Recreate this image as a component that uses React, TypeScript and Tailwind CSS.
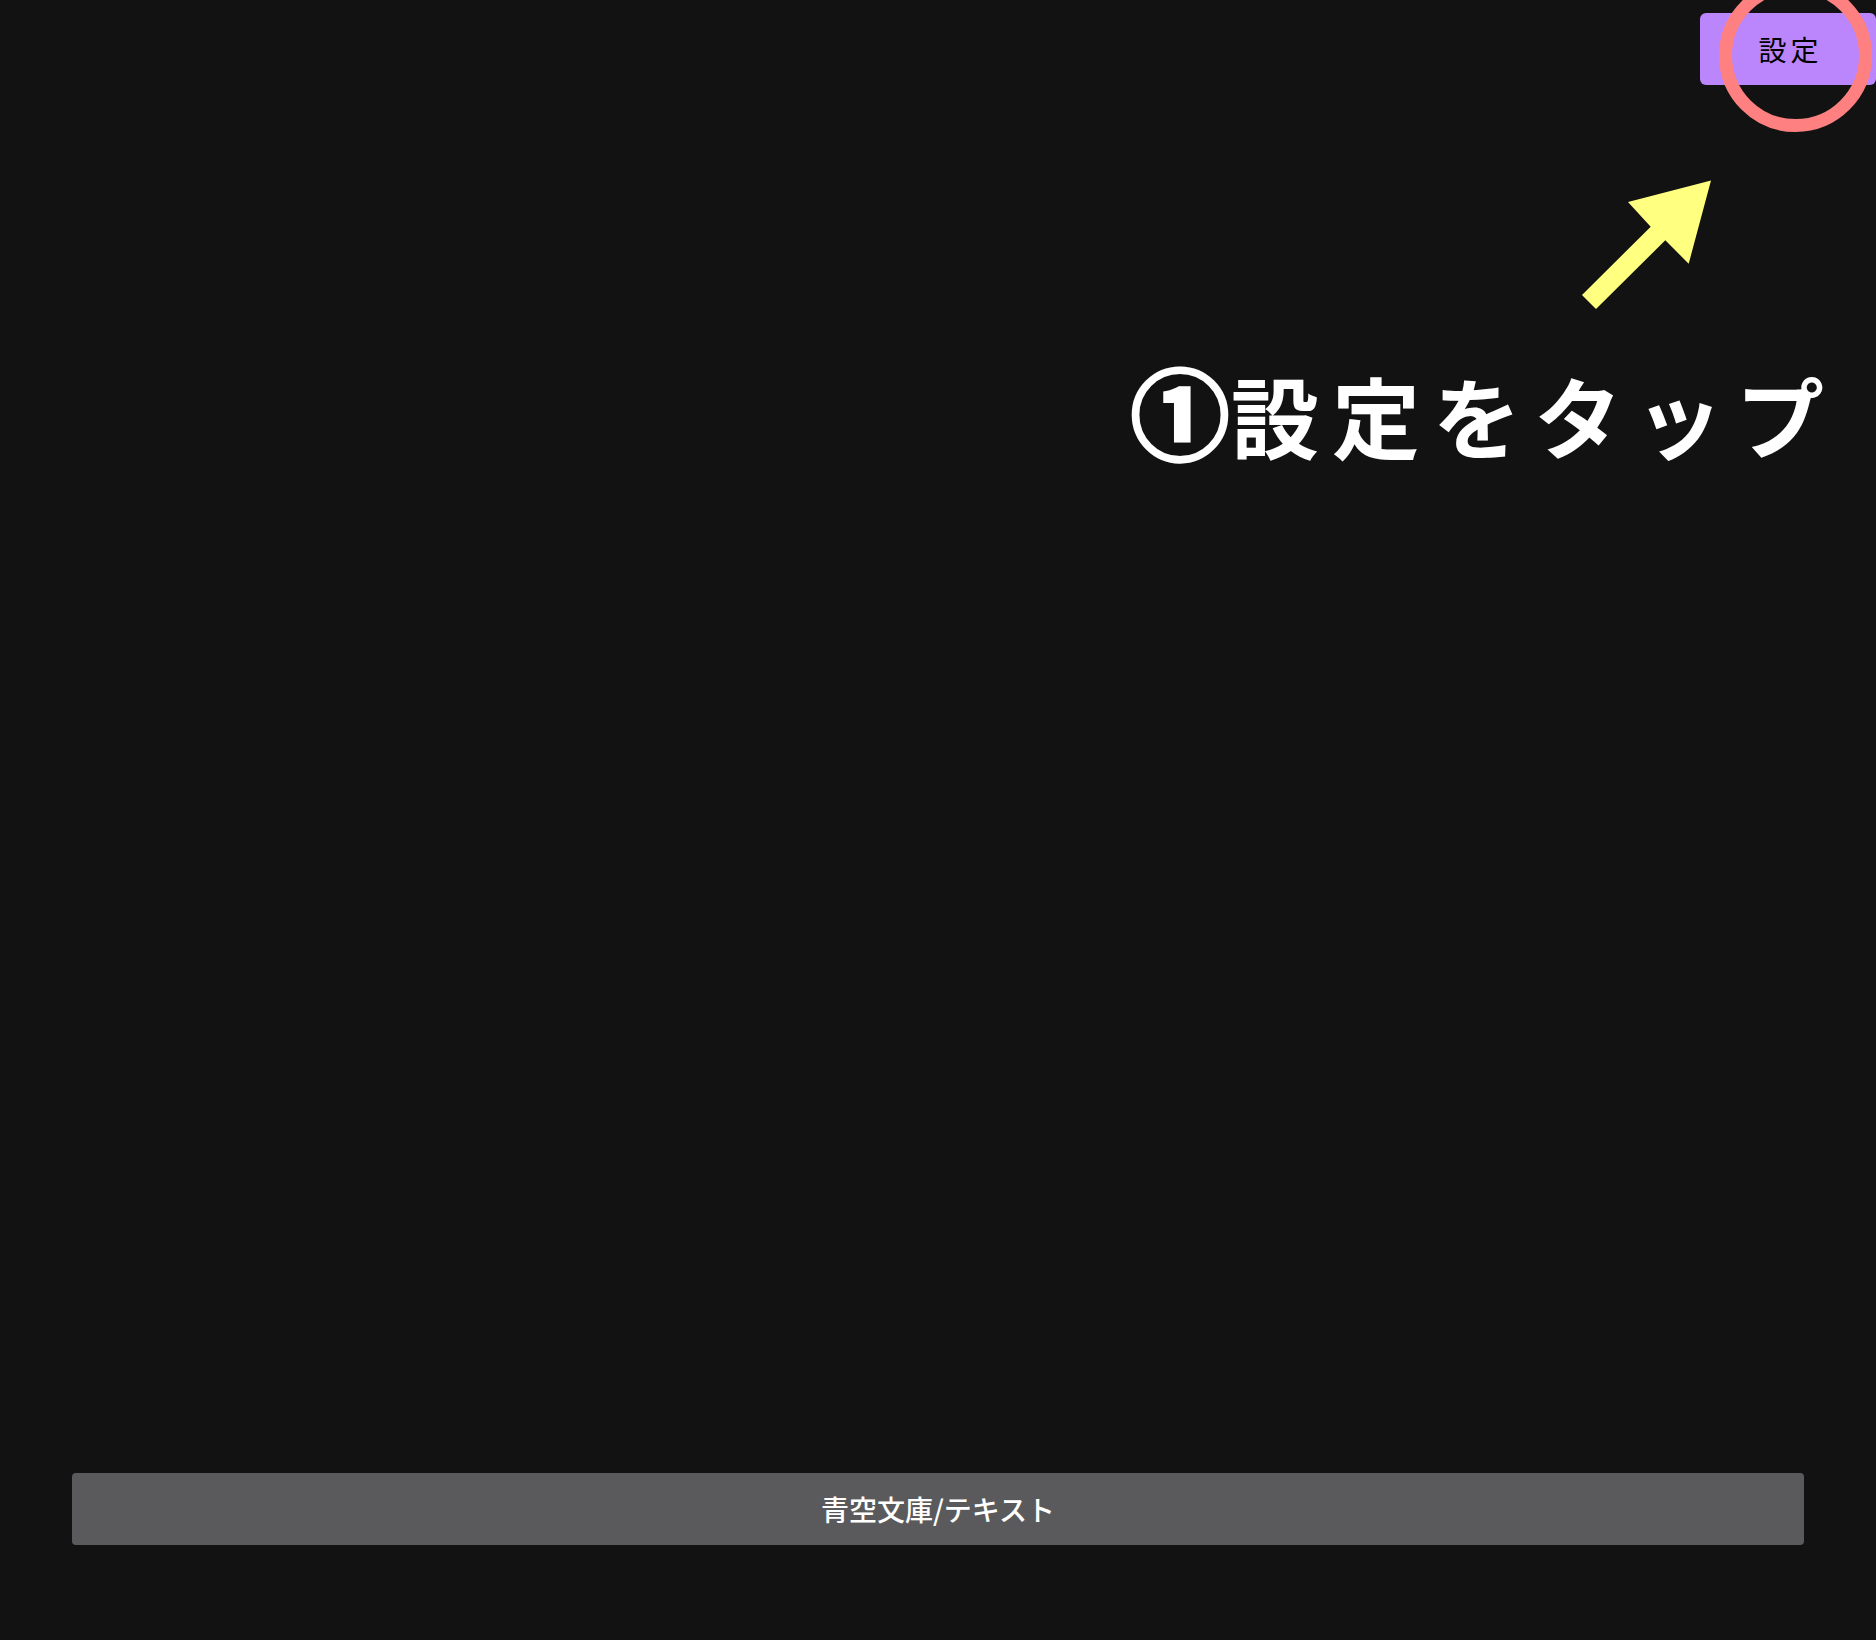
import React from "react";

const jp = "font-['Noto_Sans_CJK_JP',sans-serif]";

export default function App() {
  return (
    <div className={`relative flex h-[1640px] flex-col justify-between overflow-hidden bg-[#121212] ${jp}`}>
      <div className="flex justify-end pt-[13px]">
        <button className="flex h-[72px] w-[176px] items-center justify-center rounded-[6px] bg-[#bb86fc] pl-[5px] text-[28px] tracking-[4px] text-black">
          設定
        </button>
      </div>

      <div className="px-[72px] pb-[95px]">
        <button className="flex h-[72px] w-full items-center justify-center rounded-[4px] bg-[#5a5a5c] text-[28px] font-medium text-white">
          青空文庫/テキスト
        </button>
      </div>

      {/* Tutorial overlay */}
      <div className="absolute left-[1719px] top-[-21px] h-[153px] w-[153px] rounded-full border-[13px] border-[#ff8080]" />
      <svg className="absolute left-0 top-0" width="1876" height="320" viewBox="0 0 1876 320">
        <polygon
          fill="#ffff80"
          points="1711,180.5 1628,202 1650.7,226.7 1582,295 1596,309 1665.3,240.3 1688.7,263.7"
        />
      </svg>
      <div className="absolute left-[1131px] top-[344px] whitespace-nowrap text-[88px] font-bold leading-[130px] tracking-[13px] text-white">
        <span className="text-[98px] tracking-[2px] [-webkit-text-stroke:4px_white]">①</span>
        設定をタップ
      </div>
    </div>
  );
}
